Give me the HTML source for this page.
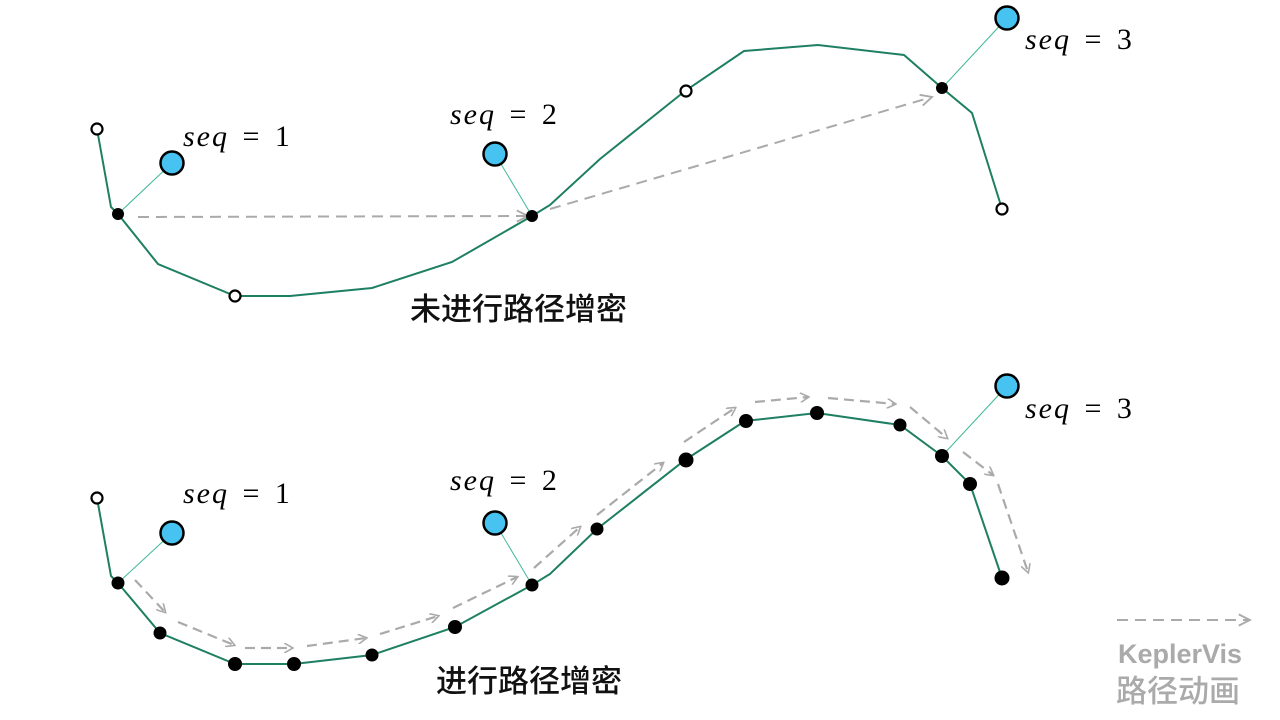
<!DOCTYPE html>
<html><head><meta charset="utf-8"><style>
body{margin:0;width:1280px;height:720px;background:#fff;overflow:hidden}
svg{display:block}
.s{font-family:"Liberation Serif",serif;font-size:30px;fill:#000;letter-spacing:2px;word-spacing:4px}
.c{font-family:"Liberation Sans","Noto Sans CJK SC",sans-serif;font-weight:500;font-size:31px;fill:#111}
.g{font-family:"Liberation Sans","Noto Sans CJK SC",sans-serif;font-weight:bold;font-size:27px;fill:#aaa}
</style></head><body>
<svg width="1280" height="720" viewBox="0 0 1280 720">
<defs><marker id="a" viewBox="0 0 10 10" refX="8" refY="5" markerWidth="10" markerHeight="10" markerUnits="userSpaceOnUse" orient="auto"><path d="M0,0 L9,5 L0,10" fill="none" stroke="#aaa" stroke-width="1.6"/></marker>
<marker id="b" viewBox="0 0 16 16" refX="14" refY="8" markerWidth="15" markerHeight="15" markerUnits="userSpaceOnUse" orient="auto"><path d="M2,2 L14,8 L2,14" fill="none" stroke="#aaa" stroke-width="2"/></marker></defs>
<g fill="none" stroke="#1e7f63" stroke-width="2">
<polyline points="97,129 111,207 118,214 158,264 235,296 290,296 372,288 452,262 532,216 550,205 600,159 685,91 744,51 818,45 904,55 942,88 972,113 1002,209"/>
<polyline points="97,498 111,576 118,583 160,633 235,664 294,664 372,655 455,627 532,585 550,574 597,529 685,460 745,421 817,413 900,425 942,456 970,484 1002,578"/>
</g>
<g stroke="#3fb89a" stroke-width="1">
<line x1="118" y1="214" x2="172" y2="163"/><line x1="532" y1="216" x2="495" y2="154"/><line x1="942" y1="88" x2="1007" y2="18"/>
<line x1="118" y1="583" x2="172" y2="533"/><line x1="532" y1="585" x2="495" y2="523"/><line x1="942" y1="456" x2="1007" y2="386"/>
</g>
<g stroke="#aaa" stroke-width="2" stroke-dasharray="11,7" fill="none" marker-end="url(#b)">
<line x1="138" y1="217" x2="528" y2="216"/><line x1="550" y1="209" x2="932" y2="97"/>
<line x1="1117" y1="620" x2="1250" y2="620"/>
</g>
<g stroke="#aaa" stroke-width="2.2" stroke-dasharray="10,6" fill="none" marker-end="url(#a)">
<line x1="135" y1="580" x2="165" y2="612"/><line x1="178" y1="622" x2="234" y2="645"/>
<line x1="245" y1="648" x2="292" y2="648"/><line x1="307" y1="646" x2="366" y2="638"/>
<line x1="380" y1="634" x2="438" y2="616"/><line x1="453" y1="608" x2="517" y2="577"/>
<line x1="534" y1="568" x2="580" y2="527"/><line x1="597" y1="515" x2="663" y2="463"/>
<line x1="684" y1="442" x2="735" y2="408"/><line x1="755" y1="402" x2="808" y2="397"/>
<line x1="828" y1="398" x2="895" y2="404"/><line x1="910" y1="407" x2="947" y2="438"/>
<line x1="963" y1="452" x2="993" y2="475"/><line x1="998" y1="484" x2="1028" y2="572"/>
</g>
<g fill="#fff" stroke="#000" stroke-width="2.2">
<circle cx="97" cy="129" r="5.5"/><circle cx="235" cy="296" r="5.5"/><circle cx="686" cy="91" r="5.5"/><circle cx="1002" cy="209" r="5.5"/><circle cx="97" cy="498" r="5.5"/>
</g>
<g fill="#000">
<circle cx="118" cy="214" r="6"/><circle cx="532" cy="216" r="6"/><circle cx="942" cy="88" r="6"/>
<circle cx="118" cy="583" r="6.5"/><circle cx="160" cy="633" r="6.5"/><circle cx="235" cy="664" r="7"/><circle cx="294" cy="664" r="7"/><circle cx="372" cy="655" r="6.5"/><circle cx="455" cy="627" r="7"/><circle cx="532" cy="585" r="6.5"/><circle cx="597" cy="529" r="6.5"/><circle cx="686" cy="460" r="7.5"/><circle cx="746" cy="421" r="7"/><circle cx="817" cy="413" r="7"/><circle cx="900" cy="425" r="6.5"/><circle cx="942" cy="456" r="7"/><circle cx="970" cy="484" r="7"/><circle cx="1002" cy="578" r="7.5"/>
</g>
<g fill="#47c3f2" stroke="#000" stroke-width="2.5">
<circle cx="172" cy="163" r="11.5"/><circle cx="495" cy="154" r="11.5"/><circle cx="1007" cy="18" r="11.5"/>
<circle cx="172" cy="533" r="11.5"/><circle cx="495" cy="523" r="11.5"/><circle cx="1007" cy="386" r="11.5"/>
</g>
<text class="s" x="183" y="146"><tspan font-style="italic">seq</tspan> = 1</text>
<text class="s" x="450" y="124"><tspan font-style="italic">seq</tspan> = 2</text>
<text class="s" x="1025" y="49"><tspan font-style="italic">seq</tspan> = 3</text>
<text class="s" x="183" y="503"><tspan font-style="italic">seq</tspan> = 1</text>
<text class="s" x="450" y="490"><tspan font-style="italic">seq</tspan> = 2</text>
<text class="s" x="1025" y="418"><tspan font-style="italic">seq</tspan> = 3</text>
<text class="c" x="410" y="320">未进行路径增密</text>
<text class="c" x="436" y="692">进行路径增密</text>
<text class="g" x="1118" y="663">KeplerVis</text>
<text class="g" x="1116" y="702" style="font-size:31px;font-weight:500">路径动画</text>
</svg>
</body></html>
